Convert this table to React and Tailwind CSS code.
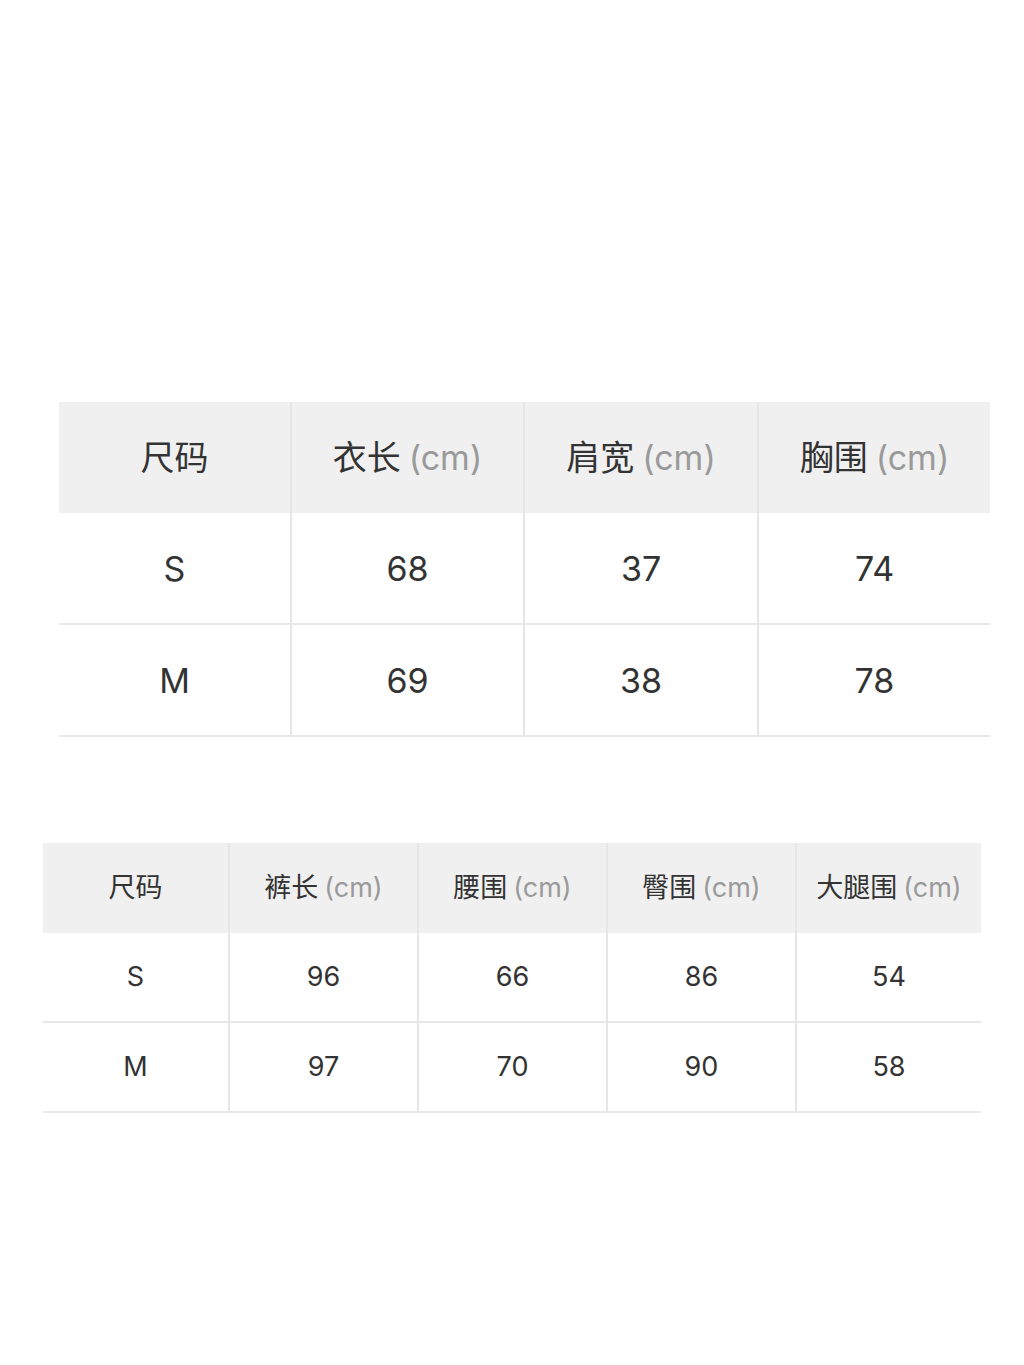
import React from 'react'

const font = { fontFamily: 'Inter, "Noto Sans CJK SC", sans-serif' }

const topHead = [['尺码', ''], ['衣长', '(cm)'], ['肩宽', '(cm)'], ['胸围', '(cm)']]
const topRows = [['S', '68', '37', '74'], ['M', '69', '38', '78']]

const bottomHead = [['尺码', ''], ['裤长', '(cm)'], ['腰围', '(cm)'], ['臀围', '(cm)'], ['大腿围', '(cm)']]
const bottomRows = [['S', '96', '66', '86', '54'], ['M', '97', '70', '90', '58']]

const HeadCell = ({ label, unit, first, big }) => (
    <div className={`flex items-center justify-center bg-[#f0f0f0] ${first ? '' : 'border-l-2 border-[#e6e6e6]'} ${big ? 'h-[111px] text-[34px]' : 'h-[90px] text-[27px]'} text-[#333333]`}>
        <span>{label}</span>
        {unit && <span className={`${big ? 'ml-2' : 'ml-1.5'} text-[#9a9a9a]`}>{unit}</span>}
    </div>
)

const BodyCell = ({ value, first, big }) => (
    <div className={`flex items-center justify-center border-b-2 border-[#e8e8e8] ${first ? '' : 'border-l-2 border-l-[#e6e6e6]'} ${big ? 'h-[112px] text-[34px]' : 'h-[90px] text-[27px]'} text-[#333333]`}>
        {value}
    </div>
)

export default function App() {
    return (
        <div className="w-[1024px] h-[1365px] bg-white" style={font}>
            <div className="pt-[402px] pl-[59px]">
                <div className="w-[931px] grid grid-cols-[231px_233px_234px_233px]">
                    {topHead.map(([l, u], i) => (
                        <HeadCell key={l} label={l} unit={u} first={i === 0} big />
                    ))}
                    {topRows.map((row) =>
                        row.map((v, i) => <BodyCell key={row[0] + i} value={v} first={i === 0} big />)
                    )}
                </div>
            </div>
            <div className="pt-[106px] pl-[43px]">
                <div className="w-[938px] grid grid-cols-[185px_189px_189px_189px_186px]">
                    {bottomHead.map(([l, u], i) => (
                        <HeadCell key={l} label={l} unit={u} first={i === 0} />
                    ))}
                    {bottomRows.map((row) =>
                        row.map((v, i) => <BodyCell key={row[0] + i} value={v} first={i === 0} />)
                    )}
                </div>
            </div>
        </div>
    )
}
